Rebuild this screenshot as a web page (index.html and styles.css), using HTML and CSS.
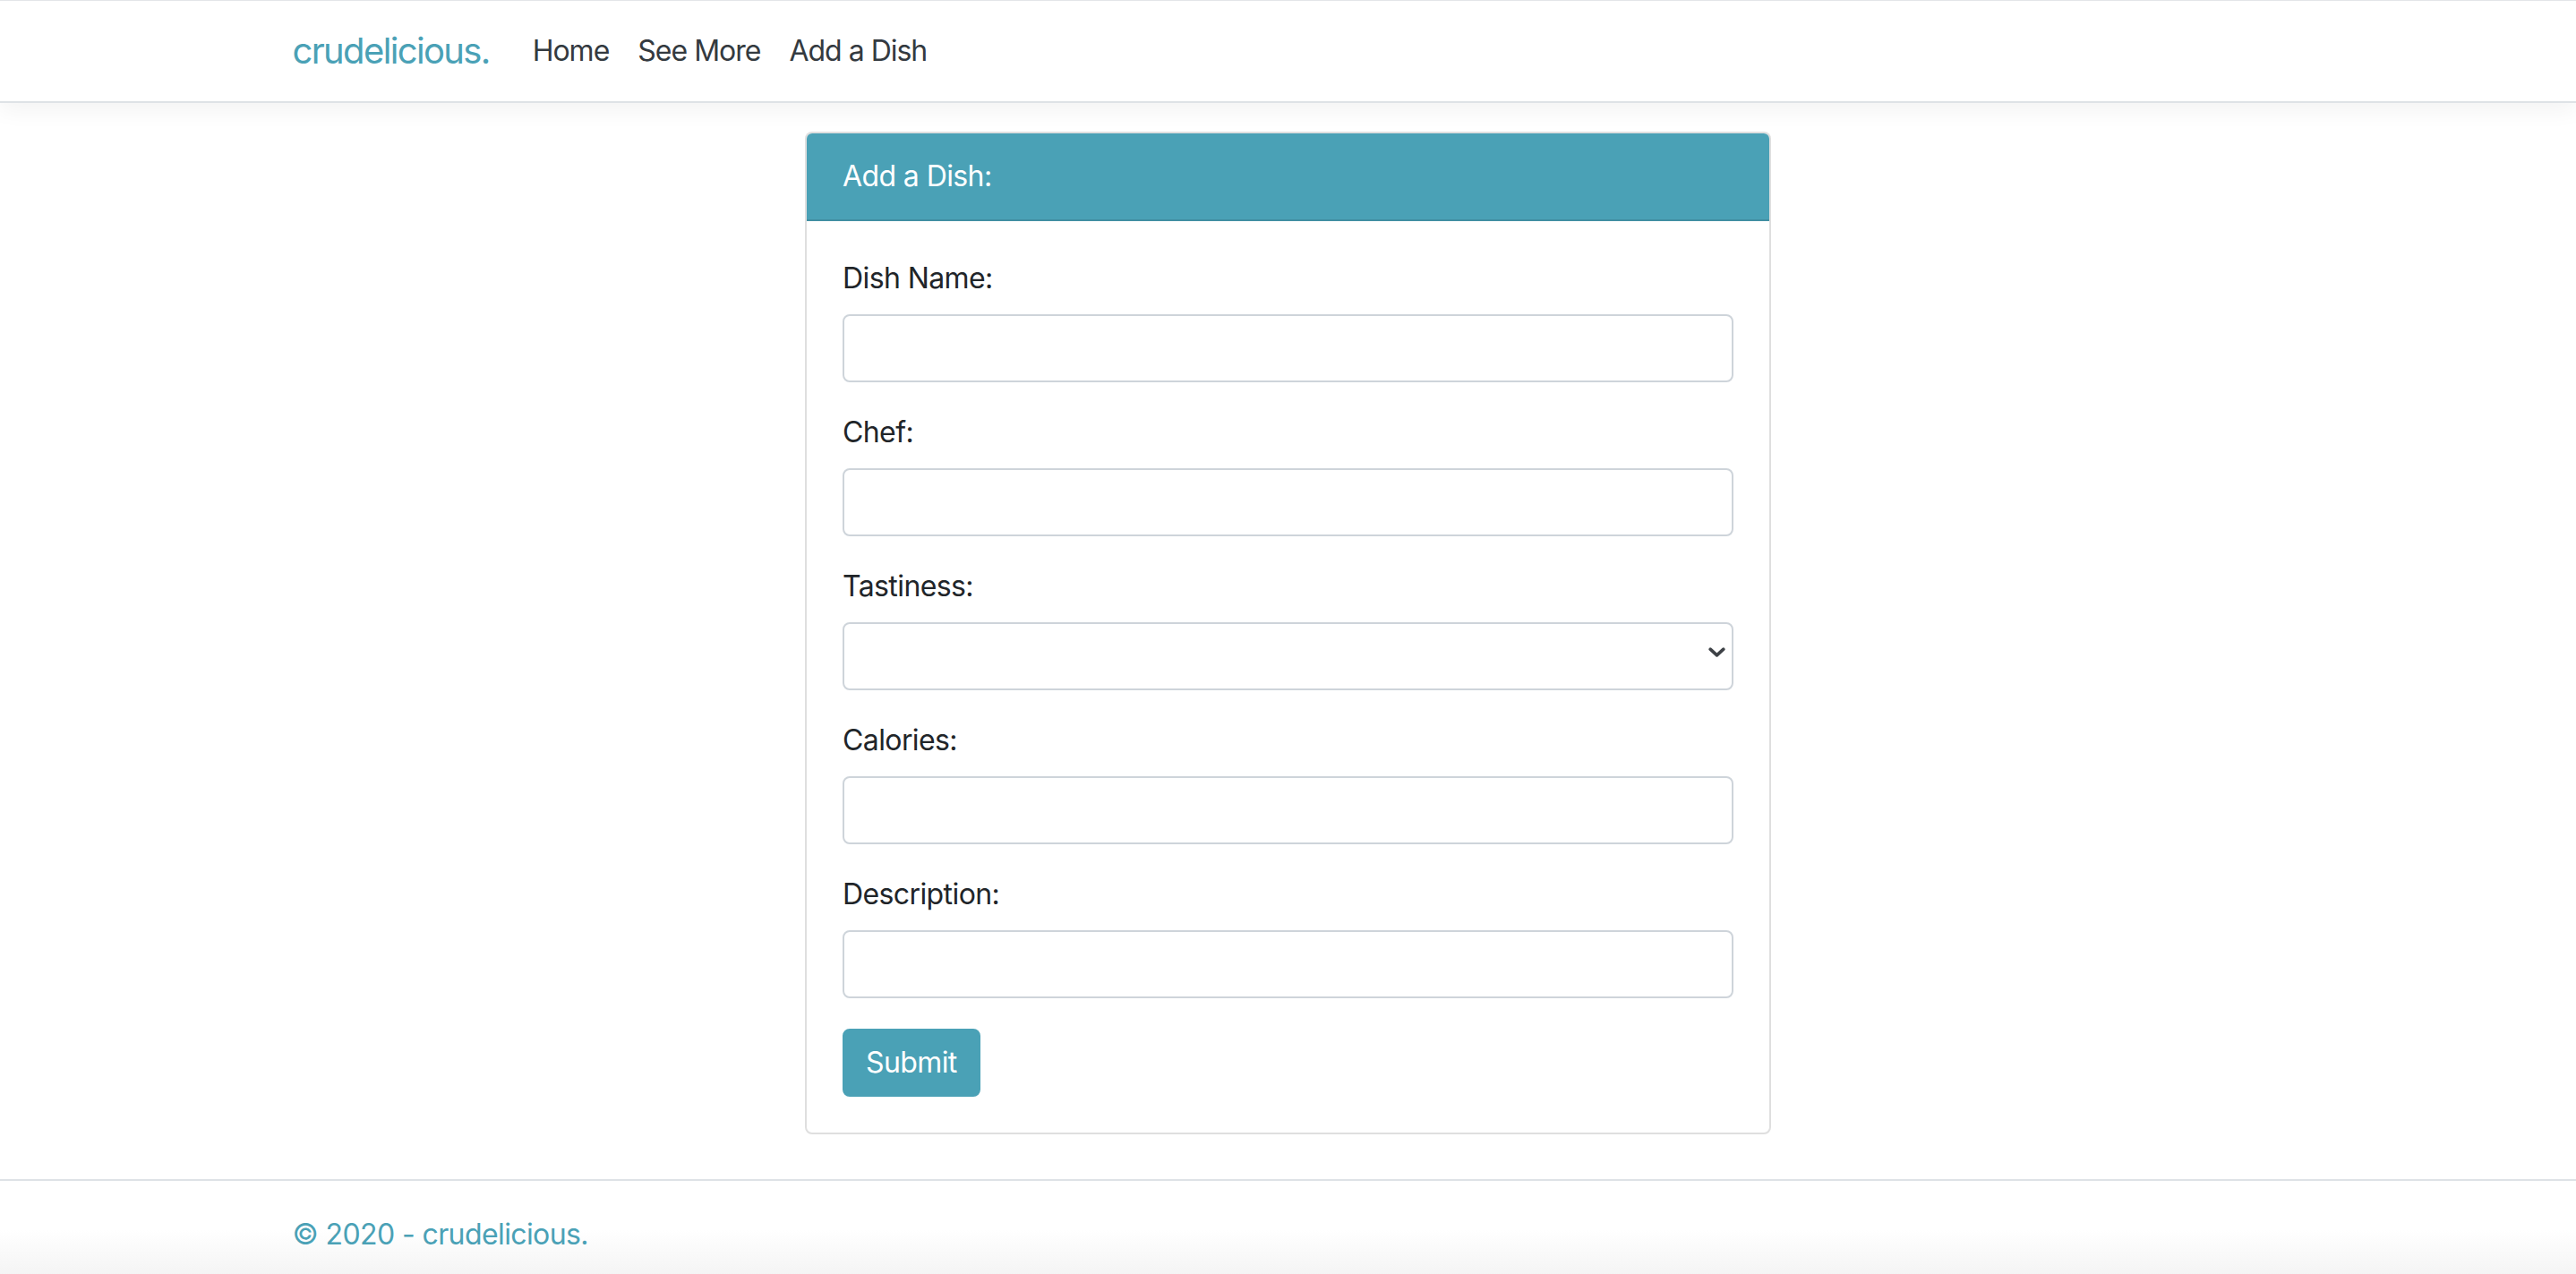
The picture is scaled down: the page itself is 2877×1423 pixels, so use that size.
FILE: index.html
```html
<!DOCTYPE html>
<html lang="en">
<head>
<meta charset="utf-8">
<title>Add a Dish - crudelicious.</title>
<link rel="stylesheet" href="styles.css">
</head>
<body>
<header class="navbar">
  <div class="container nav-inner">
    <a class="brand" href="#">crudelicious.</a>
    <ul class="nav">
      <li><a class="nav-link" href="#">Home</a></li>
      <li><a class="nav-link" href="#">See More</a></li>
      <li><a class="nav-link" href="#">Add a Dish</a></li>
    </ul>
  </div>
</header>
<main class="container main">
  <div class="card">
    <div class="card-header">Add a Dish:</div>
    <form class="card-body">
      <div class="form-group">
        <label class="label" for="name">Dish Name:</label>
        <input class="form-control" id="name" type="text">
      </div>
      <div class="form-group">
        <label class="label" for="chef">Chef:</label>
        <input class="form-control" id="chef" type="text">
      </div>
      <div class="form-group">
        <label class="label" for="tastiness">Tastiness:</label>
        <div class="select-wrap">
          <select class="form-control select" id="tastiness">
            <option></option>
            <option>1</option>
            <option>2</option>
            <option>3</option>
            <option>4</option>
            <option>5</option>
          </select>
          <svg class="chevron" width="19" height="11" viewBox="0 0 19 11" aria-hidden="true">
            <path d="M2.2 2.2 L9.5 8.8 L16.8 2.2" fill="none" stroke="#3d4146" stroke-width="3.6" stroke-linecap="round" stroke-linejoin="round"/>
          </svg>
        </div>
      </div>
      <div class="form-group">
        <label class="label" for="calories">Calories:</label>
        <input class="form-control" id="calories" type="text">
      </div>
      <div class="form-group">
        <label class="label" for="description">Description:</label>
        <input class="form-control" id="description" type="text">
      </div>
      <button class="btn" type="button">Submit</button>
    </form>
  </div>
</main>
<footer class="footer">
  <div class="container">© 2020 - crudelicious.</div>
</footer>
</body>
</html>
```
FILE: styles.css
```css
* { box-sizing: border-box; }

html, body {
  margin: 0;
  padding: 0;
}

body {
  font-family: Inter, "Noto Sans", "Liberation Sans", sans-serif;
  font-size: 32px;
  line-height: 1.5;
  letter-spacing: -0.6px;
  color: #212529;
  background: #fff;
}

.container {
  max-width: 2280px;
  margin: 0 auto;
  padding: 0 28px;
}

/* Navbar */
.navbar {
  border-top: 1px solid #e3e5e8;
  border-bottom: 2px solid #dee2e6;
  background: #fff;
  padding: 16px 0;
  box-shadow: 0 8px 24px rgba(0, 0, 0, 0.05);
  position: relative;
}

.nav-inner {
  display: flex;
  align-items: center;
}

.brand {
  font-size: 40px;
  line-height: 60px;
  letter-spacing: -1.65px;
  padding: 10px 0;
  margin-right: 32px;
  color: #4aa1b6;
  text-decoration: none;
}

.nav {
  display: flex;
  list-style: none;
  margin: 0;
  padding: 0;
}

.nav-link {
  display: block;
  padding: 16px 16px;
  letter-spacing: -1px;
  color: #343a40;
  text-decoration: none;
}

/* Card */
.main {
  padding-top: 32px;
}

.card {
  width: 1079px;
  margin: 0 auto;
  border: 2px solid rgba(0, 0, 0, 0.125);
  border-radius: 8px;
  background: #fff;
  overflow: hidden;
}

.card-header {
  background: #4aa1b6;
  color: #fff;
  padding: 24px 40px;
  border-bottom: 2px solid #418fa2;
}

.card-body {
  padding: 40px;
  margin: 0;
}

.form-group {
  margin-bottom: 32px;
}

.label {
  display: block;
  margin-bottom: 16px;
}

.form-control {
  display: block;
  width: 100%;
  height: 76px;
  padding: 12px 24px;
  font: inherit;
  color: #495057;
  background: #fff;
  border: 2px solid #ced4da;
  border-radius: 8px;
  margin: 0;
}

.select-wrap {
  position: relative;
}

.select {
  appearance: none;
  -webkit-appearance: none;
}

.chevron {
  position: absolute;
  right: 9px;
  top: 28px;
  pointer-events: none;
}

.btn {
  display: inline-block;
  font: inherit;
  letter-spacing: -0.6px;
  color: #fff;
  background: #4aa1b6;
  border: 2px solid #4aa1b6;
  border-radius: 8px;
  padding: 12px 24px;
  margin: 2px 0 0;
  cursor: pointer;
}

/* Footer */
.footer {
  margin-top: 50px;
  border-top: 2px solid #dee2e6;
  line-height: 120px;
  color: #4aa1b6;
  white-space: nowrap;
  background: linear-gradient(to bottom, #fff 0, #fff 55px, #f2f2f2 115px);
}
```
